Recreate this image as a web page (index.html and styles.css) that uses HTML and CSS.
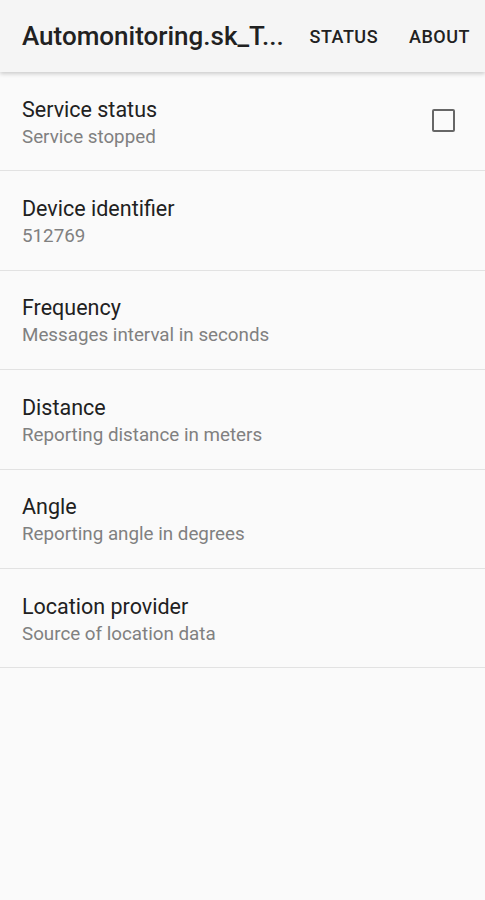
FILE: index.html
```html
<!DOCTYPE html>
<html lang="en">
<head>
    <meta charset="UTF-8">
    <meta name="viewport" content="width=device-width, initial-scale=1.0">
    <title>Automonitoring.sk_Tracker</title>
    <link rel="stylesheet" href="styles.css">
</head>
<body>
    <header class="app-bar">
        <div class="app-title">Automonitoring.sk_T...</div>
        <span class="action">STATUS</span>
        <span class="action">ABOUT</span>
    </header>
    <div class="settings">
        <div class="pref">
            <div class="pref-text">
                <div class="pref-title">Service status</div>
                <div class="pref-summary">Service stopped</div>
            </div>
            <span class="checkbox"></span>
        </div>
        <div class="pref">
            <div class="pref-text">
                <div class="pref-title">Device identifier</div>
                <div class="pref-summary">512769</div>
            </div>
        </div>
        <div class="pref">
            <div class="pref-text">
                <div class="pref-title">Frequency</div>
                <div class="pref-summary">Messages interval in seconds</div>
            </div>
        </div>
        <div class="pref">
            <div class="pref-text">
                <div class="pref-title">Distance</div>
                <div class="pref-summary">Reporting distance in meters</div>
            </div>
        </div>
        <div class="pref">
            <div class="pref-text">
                <div class="pref-title">Angle</div>
                <div class="pref-summary">Reporting angle in degrees</div>
            </div>
        </div>
        <div class="pref">
            <div class="pref-text">
                <div class="pref-title">Location provider</div>
                <div class="pref-summary">Source of location data</div>
            </div>
        </div>
    </div>
</body>
</html>
```

FILE: styles.css
```css
body {
    font-family: Roboto, sans-serif;
    margin: 0;
    padding: 0;
    background-color: #fafafa;
    height: 900px;
    overflow: hidden;
}
.app-bar {
    display: flex;
    align-items: center;
    height: 72px;
    padding: 0 15px 0 22px;
    background-color: #f5f5f5;
    box-shadow: 0 2px 4px rgba(0, 0, 0, 0.18);
    position: relative;
}
.app-title {
    flex: 1;
    font-size: 26px;
    font-weight: 500;
    color: #212121;
    white-space: nowrap;
}
.action {
    flex: none;
    font-size: 18px;
    font-weight: 500;
    color: #212121;
    margin-left: 16px;
    letter-spacing: 0.5px;
}
.action + .action {
    margin-left: 31px;
}
.pref {
    display: flex;
    align-items: center;
    padding: 3px 30px 0 22px;
    box-sizing: border-box;
    height: 99.4px;
    border-bottom: 1px solid #e2e2e2;
}
.pref-text {
    flex: 1;
}
.pref-title {
    font-size: 21.5px;
    color: #212121;
    line-height: 28px;
}
.pref-summary {
    font-size: 18.8px;
    color: #808080;
    line-height: 26px;
}
.checkbox {
    width: 19px;
    height: 19px;
    border: 2px solid #666;
    border-radius: 2px;
    margin-top: -4px;
}
```
